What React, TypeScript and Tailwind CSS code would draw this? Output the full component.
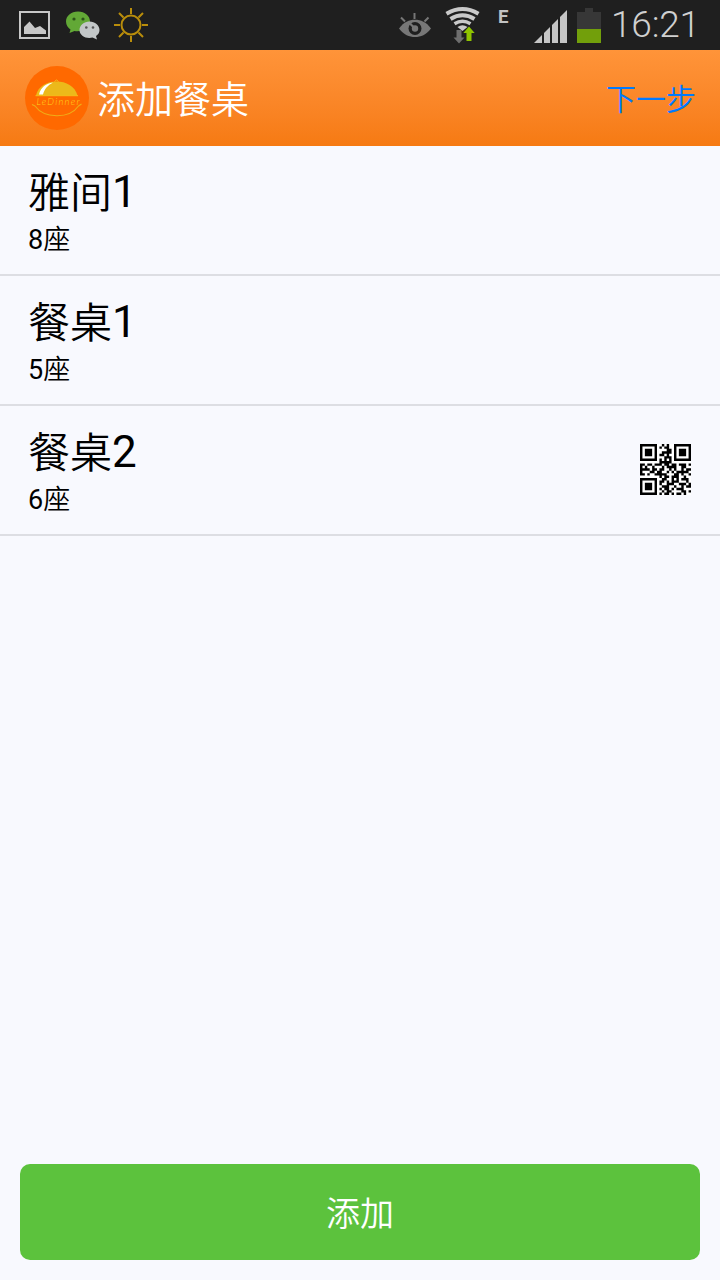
import { clsx } from "clsx";

type Table = {
  name: string;
  index: string;
  seats: number;
  hasCode?: boolean;
};

const TABLES: Table[] = [
  { name: "雅间", index: "1", seats: 8 },
  { name: "餐桌", index: "1", seats: 5 },
  { name: "餐桌", index: "2", seats: 6, hasCode: true },
];

const QR_ROWS = [
  "111111100101001111111",
  "100000101011001000001",
  "101110100001101011101",
  "101110100111101011101",
  "101110101101001011101",
  "100000100011101000001",
  "111111101010101111111",
  "000000001111100000000",
  "110110111011011011101",
  "101001000101111001100",
  "111101101100101001011",
  "100011011001010111110",
  "110100111110001101001",
  "000000001011011100100",
  "111111100110010101110",
  "100000101101011100010",
  "101110101001110011101",
  "101110100111001001011",
  "101110101011010111000",
  "100000100101100001101",
  "111111101011010110100",
];

// one path for all cells, so that neighbours join without seams
const QR_PATH = QR_ROWS.flatMap((row, y) =>
  row.split("").map((cell, x) => (cell === "1" ? `M${x} ${y}h1v1h-1z` : "")),
).join("");

function QrCode() {
  return (
    <svg className="mb-0.5 h-[51px] w-[51px] bg-white" viewBox="0 0 21 21">
      <path d={QR_PATH} />
    </svg>
  );
}

function LeftIcons() {
  return (
    <svg className="h-[50px] w-[160px]" viewBox="0 0 160 50">
      {/* gallery */}
      <rect x="20" y="12" width="29" height="26" fill="none" stroke="#c8c8c8" strokeWidth="2" />
      <path d="M24 34V27L29.500 21.500L35 28L40 26L46 30.500V34Z" fill="#c8c8c8" />
      {/* wechat */}
      <path
        d="M78 11.500C71 11.500 66 16 66 21.500C66 25 68 27.800 70.500 29.500L69.500 33L74.500 30.900C80 32 90 29.500 90 21.500C90 16 85 11.500 78 11.500Z"
        fill="#62a836"
      />
      <circle cx="74" cy="19" r="1.600" fill="#2c5419" />
      <circle cx="83" cy="19" r="1.600" fill="#2c5419" />
      <path
        d="M89.500 21.500C84 21.500 79.500 25.300 79.500 30C79.500 35.500 86 39.300 92.500 37.600L97 39.500L96 36C98.300 34.500 99.500 32.500 99.500 30C99.500 25.300 95 21.500 89.500 21.500Z"
        fill="#c3c7c8"
      />
      <circle cx="86.300" cy="27.500" r="1.300" fill="#555" />
      <circle cx="93" cy="27.500" r="1.300" fill="#555" />
      {/* brightness */}
      <g fill="none" stroke="#b98d0b" strokeWidth="2">
        <circle cx="131" cy="25" r="9.500" />
        <path d="M131 8v6M131 36v6M114 25h6M142 25h6M119 13l4.500 4.500M138.500 32.500L143 37M143 13l-4.500 4.500M123.500 32.500L119 37" />
      </g>
    </svg>
  );
}

function RightIcons() {
  return (
    <svg className="h-[50px] w-[218px]" viewBox="390 0 218 50">
      {/* smart stay */}
      <path
        d="M399 28.500C404 22 409 19.800 415 19.800S426 22 431 28.500C426 35 421 37 415 37S404 35 399 28.500Z"
        fill="#777"
      />
      <circle cx="415" cy="28.500" r="6.500" fill="#1f1f1f" />
      <circle cx="415" cy="28.500" r="3.200" fill="#777" />
      <path d="M415 28.500L410 23.500" stroke="#777" strokeWidth="2.200" />
      <path d="M414.500 13v6M401 17.500l4 4M428.500 17.500l-4 4" stroke="#777" strokeWidth="2" />
      {/* wifi */}
      <g fill="none" stroke="#c9c9c9" strokeWidth="4">
        <path d="M446.500 13.700Q462.500 4.300 478.500 13.700" />
        <path d="M450.500 19Q462.500 11.500 474.500 19" />
        <path d="M454.500 23.800Q462.500 18.600 470.500 23.800" strokeWidth="3.400" />
      </g>
      <path d="M457.500 27Q462.500 23.500 467.500 27L462.500 31Z" fill="#c9c9c9" />
      <path d="M456.500 30h5v7.500h3L459 43.500L453.500 37.500h3Z" fill="#6e6e6e" />
      <path d="M466.500 41v-8h-3.200L469 26.500L474.700 33h-3.200v8Z" fill="#8fc400" />
      {/* mobile network */}
      <text
        x="498"
        y="23"
        fill="#c3c3c3"
        className="font-['Roboto',sans-serif] text-[19px] font-bold"
        textLength="10.500"
        lengthAdjust="spacingAndGlyphs"
      >
        E
      </text>
      <g fill="#c5c5c5">
        <path d="M534 43L542 35V43Z" />
        <path d="M544 43V33L550 27V43Z" />
        <path d="M552 43V25L558 19V43Z" />
        <path d="M560 43V17L567 10V43Z" />
      </g>
      {/* battery */}
      <path d="M577 12h8V8h8v4h8v17h-24Z" fill="#373737" />
      <rect x="577" y="29" width="24" height="14" fill="#729f0b" />
    </svg>
  );
}

function Logo() {
  return (
    <svg className="h-16 w-16" viewBox="0 0 64 64">
      <circle cx="32" cy="32" r="32" fill="#ff6900" />
      <path d="M11 29.500C13 20 22 15.500 31.500 15.500S50 20 52.500 29.500Z" fill="#ecb91a" />
      <path d="M14 28.500C16 21 21 17.500 28 16.500C22.500 19.500 19.500 23 18 28.500Z" fill="#fff" />
      <path d="M10.500 29.700H53M29.500 15.500Q31.500 12.500 33.500 15.500" fill="none" stroke="#f4c21c" strokeWidth="1" />
      <path
        d="M7 38.500L10 40C19 52.500 44 53.500 53.500 40L56.500 38"
        fill="none"
        stroke="#efae17"
        strokeWidth="1.100"
      />
      <text
        x="11.500"
        y="38.500"
        fill="#ffd21c"
        className="font-['Lato',sans-serif] text-[9.5px] font-light italic"
        textLength="43"
        lengthAdjust="spacing"
      >
        LeDinner
      </text>
    </svg>
  );
}

function TableRow({ table }: { table: Table }) {
  return (
    <li className="flex h-[130px] items-center justify-between border-b-2 border-[#dddee3] pl-7 pr-[29px]">
      <div>
        <p className="mt-px flex h-[60px] items-center text-[42px] leading-[60px]">
          <span className="pt-[3px] font-[350]">{table.name}</span>
          <span className="text-[44px]">{table.index}</span>
        </p>
        <p className="mb-px flex h-[36px] items-center text-[27px] leading-[36px]">
          {table.seats}
          <span className="font-[350]">座</span>
        </p>
      </div>
      {table.hasCode && <QrCode />}
    </li>
  );
}

export default function App() {
  return (
    <div
      className={clsx(
        "flex h-[1280px] w-[720px] flex-col overflow-hidden bg-[#f8f9fe] text-black",
        "font-['Roboto','Noto_Sans_CJK_SC',sans-serif]",
      )}
    >
      <div className="flex h-[50px] shrink-0 items-center bg-[#1f1f1f]">
        <LeftIcons />
        <div className="ml-auto flex items-center">
          <RightIcons />
          <span className="w-[112px] pl-[3px] text-[37px] leading-[50px] font-light tracking-[-0.2px] text-[#d0d0d0]">
            16:21
          </span>
        </div>
      </div>

      <header className="flex h-24 shrink-0 items-center bg-linear-to-b from-[#ff9439] to-[#f67a12] pl-[25px] pr-6">
        <Logo />
        <h1 className="ml-2 pb-[3px] font-['Noto_Sans_CJK_SC',sans-serif] text-[38px] leading-[50px] font-[350] text-white">
          添加餐桌
        </h1>
        <button className="ml-auto pb-[3px] font-['Noto_Sans_CJK_SC',sans-serif] text-[30px] leading-[40px] font-[350] text-[#007aff]">
          下一步
        </button>
      </header>

      <ul>
        {TABLES.map((table) => (
          <TableRow key={table.name + table.index} table={table} />
        ))}
      </ul>

      <button className="mx-5 mt-auto mb-5 h-24 shrink-0 rounded-[10px] bg-[#5cc23d] pb-px font-['Noto_Sans_CJK_SC',sans-serif] text-[34px] font-[350] text-white">
        添加
      </button>
    </div>
  );
}
